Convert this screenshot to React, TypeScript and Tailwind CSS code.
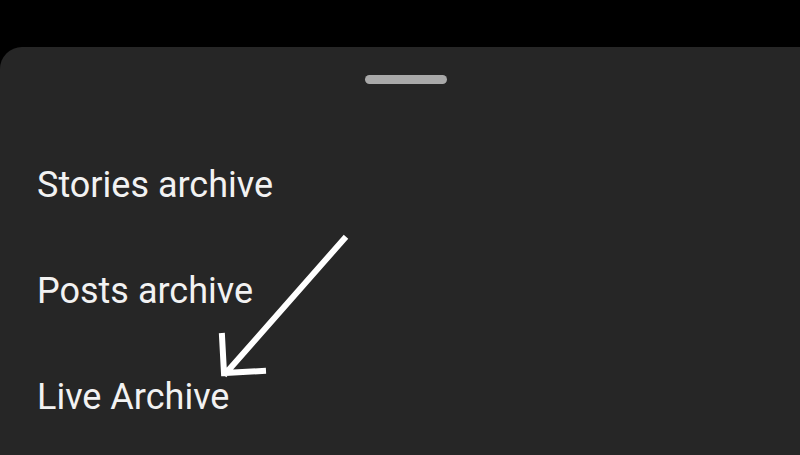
export default function App() {
  const items = ["Stories archive", "Posts archive", "Live Archive"];
  return (
    <div className="h-[455px] w-[800px] overflow-hidden bg-black pt-[47px] font-['Roboto',sans-serif]">
      <div className="relative h-full rounded-tl-[22px] bg-[#262626] pt-[28px]">
        <div className="ml-[365px] h-[9px] w-[82px] rounded-full bg-[#a9a9a9]" />
        <ul className="mt-[48px]">
          {items.map((t) => (
            <li
              key={t}
              className="flex h-[106px] items-center pl-[37px] text-[36px] text-[#f2f2f2]"
            >
              {t}
            </li>
          ))}
        </ul>
        <svg
          className="absolute left-0 top-[-47px]"
          width="800"
          height="455"
          viewBox="0 0 800 455"
          fill="none"
        >
          <path
            d="M344 239 L226 373 M222 336 L224 373 L263 371"
            stroke="#fff"
            strokeWidth="6"
            strokeLinecap="square"
            strokeLinejoin="miter"
          />
        </svg>
      </div>
    </div>
  );
}
